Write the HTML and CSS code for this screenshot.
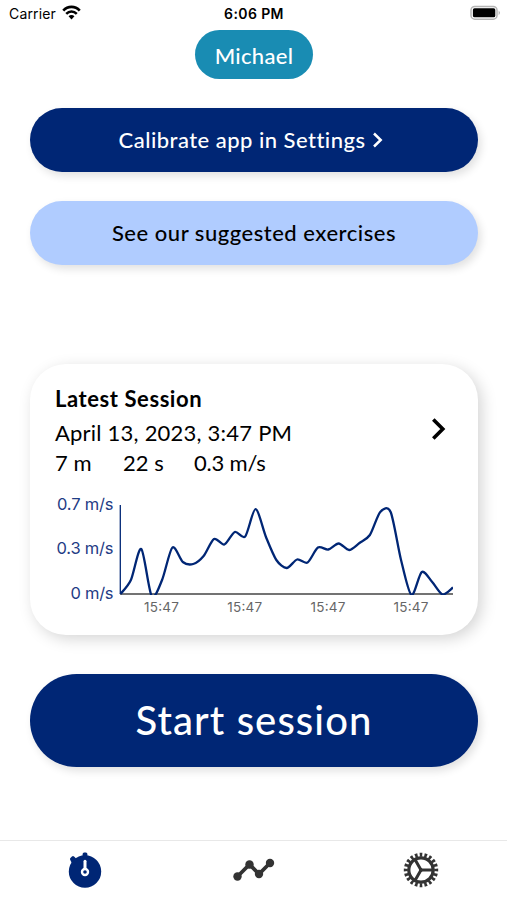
FILE: index.html
```html
<!DOCTYPE html>
<html lang="en">
<head>
    <meta charset="UTF-8">
    <meta name="viewport" content="width=device-width, initial-scale=1.0">
    <title>Home</title>
    <link rel="stylesheet" href="styles.css">
</head>
<body>
    <header class="status-bar">
        <div class="carrier">
            <span>Carrier</span>
            <svg width="19" height="15" viewBox="0 0 18 14">
                <path d="M1.2 5.2 C5.6 0.6 12.4 0.6 16.8 5.2" fill="none" stroke="#000" stroke-width="2.6"/>
                <path d="M4 8.4 C6.9 5.4 11.1 5.4 14 8.4" fill="none" stroke="#000" stroke-width="2.4"/>
                <path d="M6.2 10.6 C7.8 9.1 10.2 9.1 11.8 10.6 L9 13.6 Z"/>
            </svg>
        </div>
        <div class="clock">6:06 PM</div>
        <svg class="battery" width="31" height="15" viewBox="0 0 31 15">
            <rect x="1" y="1.4" width="26" height="12.8" rx="3.8" fill="#fff" stroke="#b5b5b5" stroke-width="1.5"/>
            <rect x="2.9" y="3.3" width="22.4" height="9" rx="1.6"/>
            <path d="M28.6 5.4 Q31.4 7.8 28.6 10.2 Z" fill="#b5b5b5"/>
        </svg>
    </header>

    <main>
        <div class="user">Michael</div>
        <button class="btn calibrate">
            <span>Calibrate app in Settings</span>
            <svg width="11" height="16" viewBox="0 0 11 16"><path d="M2 1.5 L8.7 8 L2 14.5" fill="none" stroke="#fff" stroke-width="2.5"/></svg>
        </button>
        <button class="btn exercises">See our suggested exercises</button>

        <section class="card">
            <div class="card-head">
                <div>
                    <h2>Latest Session</h2>
                    <p class="date">April 13, 2023, 3:47 PM</p>
                    <p class="stats"><span class="minutes">7 m</span><span class="seconds">22 s</span><span>0.3 m/s</span></p>
                </div>
                <svg class="arrow" width="16" height="24" viewBox="0 0 16 24"><path d="M2.3 2.5 L11.8 12 L2.3 21.5" fill="none" stroke="#000" stroke-width="3.6"/></svg>
            </div>
            <svg class="chart" width="410" height="125" viewBox="50 490 410 125">
                <clipPath id="plot"><rect x="119" y="500" width="334" height="95"/></clipPath>
                <line class="axis-y" x1="120.3" y1="505" x2="120.3" y2="594"/>
                <line class="axis-x" x1="120" y1="594" x2="453" y2="594"/>
                <path id="speed" class="speed" clip-path="url(#plot)"/>
                <g class="y-labels">
                    <text x="113.5" y="510" textLength="56.5">0.7 m/s</text>
                    <text x="113.5" y="554" textLength="57">0.3 m/s</text>
                    <text x="113.5" y="598.5" textLength="43">0 m/s</text>
                </g>
                <g class="x-labels">
                    <text x="161.5" y="612" textLength="35">15:47</text>
                    <text x="244.7" y="612" textLength="35">15:47</text>
                    <text x="328" y="612" textLength="35">15:47</text>
                    <text x="411" y="612" textLength="35">15:47</text>
                </g>
            </svg>
        </section>

        <button class="btn start">Start session</button>
    </main>

    <nav class="tabs">
        <a class="tab">
            <svg width="36" height="38" viewBox="0 0 36 38">
                <g fill="#002675">
                    <circle cx="18" cy="20.5" r="16.2"/>
                    <rect x="15.6" y="1.6" width="4.8" height="5" rx="1.5"/>
                    <path d="M4.5 8 L6 6.5 L9 9.5 L6.5 12 Z" stroke="#002675" stroke-width="3" stroke-linejoin="round"/>
                </g>
                <path d="M18 10.2 V18" stroke="#fff" stroke-width="3" stroke-linecap="round"/>
                <circle cx="18" cy="21" r="3" fill="#002675" stroke="#fff" stroke-width="2.4"/>
            </svg>
        </a>
        <a class="tab">
            <svg width="42" height="24" viewBox="0 0 42 24" fill="#333">
                <path d="M4.5 18.5 L16.5 6.5 L26 16 L37 5" fill="none" stroke="#333" stroke-width="3.8"/>
                <circle cx="4.5" cy="18.5" r="4.2"/><circle cx="16.5" cy="6.5" r="4.2"/>
                <circle cx="26" cy="16" r="4.2"/><circle cx="37" cy="5" r="4.2"/>
            </svg>
        </a>
        <a class="tab gear">
            <svg width="36" height="36" viewBox="-18 -18 36 36" fill="none" stroke="#333">
                <circle r="12.2" stroke-width="3.2"/>
                <!-- 20 teeth -->
                <circle r="15.2" stroke-width="4" pathLength="40" stroke-dasharray="1.1 0.9" stroke-dashoffset="0.55"/>
                <path d="M0 0 H12 M0 0 L-6 10.4 M0 0 L-6 -10.4" stroke-width="3"/>
                <circle r="1.5" fill="#333" stroke-width="1"/>
            </svg>
        </a>
    </nav>

    <script>
        const heights = [594, 580, 549, 596, 580, 547.5, 562, 564, 556, 539, 544.5, 532, 536.5,
            509.2, 537, 560, 568, 559.5, 562.5, 547.5, 549.5, 543.5, 550, 543, 535, 512,
            512, 560, 595, 572, 582, 594.5, 587.5];
        const points = heights.map((y, i) => [120.5 + i * 10.39, y]);

        // control point next to a, along the line through its neighbours
        function control(before, a, after, sign) {
            return [a[0] + sign * (after[0] - before[0]) * 0.14, a[1] + sign * (after[1] - before[1]) * 0.14];
        }

        let d = 'M' + points[0];
        for (let i = 1; i < points.length; i++) {
            const a = points[i - 1];
            const b = points[i];
            const c1 = control(points[i - 2] || a, a, b, 1);
            const c2 = control(a, b, points[i + 1] || b, -1);
            d += ' C' + c1 + ' ' + c2 + ' ' + b;
        }
        document.getElementById('speed').setAttribute('d', d);
    </script>
</body>
</html>
```
FILE: styles.css
```css
* {
    box-sizing: border-box;
}
body {
    margin: 0;
    height: 900px;
    display: flex;
    flex-direction: column;
    font-family: Lato, "Noto Sans", sans-serif;
    background-color: #fff;
    color: #000;
    overflow: hidden;
}
h2, p {
    margin: 0;
}
svg {
    display: block;
    flex: none;
}
.status-bar {
    height: 30px;
    padding: 5px 6px 0 9px;
    display: grid;
    grid-template-columns: 1fr auto 1fr;
    align-items: start;
    font-family: Inter, sans-serif;
    font-size: 14px;
    line-height: 18px;
}
.carrier {
    display: flex;
    gap: 6px;
    letter-spacing: 0.15px;
}
.clock {
    margin-right: 2px;
    font-weight: 600;
    letter-spacing: 0.4px;
}
.battery {
    justify-self: end;
}
main {
    flex: 1;
    padding: 0 29px 0 30px;
    display: flex;
    flex-direction: column;
}
.user {
    align-self: center;
    width: 118px;
    height: 49px;
    border-radius: 25px;
    background-color: #198cb3;
    color: #fff;
    font-size: 22px;
    font-weight: 500;
    line-height: 51px;
    letter-spacing: 0.3px;
    text-align: center;
}
.btn {
    display: flex;
    align-items: center;
    justify-content: center;
    height: 64px;
    padding: 0 0 2px;
    border: none;
    border-radius: 50px;
    font-family: inherit;
    font-size: 22px;
    font-weight: 500;
    color: #fff;
    background-color: #002675;
    box-shadow: 3px 4px 9px rgba(0, 0, 0, 0.12);
}
.calibrate {
    margin-top: 29px;
    padding-right: 6px;
    gap: 7px;
    letter-spacing: 0.47px;
}
.calibrate svg {
    margin-top: 2px;
}
.exercises {
    margin-top: 29px;
    background-color: #b0ccff;
    color: #000;
    letter-spacing: 0.52px;
}
.card {
    height: 271px;
    margin-top: 99px;
    padding: 20px 18px 0 20px;
    border-radius: 36px;
    background-color: #fff;
    box-shadow: 4px 4px 15px rgba(0, 0, 0, 0.17);
}
.card-head {
    height: 106px;
    padding: 0 13px 0 5px;
    display: flex;
    justify-content: space-between;
    font-size: 22px;
}
.card h2 {
    font-size: 22px;
    line-height: 29px;
    font-weight: 700;
    letter-spacing: 0.57px;
}
.date {
    margin-top: 5px;
    line-height: 30px;
    letter-spacing: 0.22px;
}
.stats {
    display: flex;
    line-height: 30px;
    letter-spacing: -0.2px;
}
.minutes {
    width: 68px;
    letter-spacing: 0;
}
.seconds {
    width: 71px;
    letter-spacing: 0;
}
.arrow {
    margin-top: 33px;
}
.axis-y {
    stroke: #002675;
    stroke-width: 1.3;
}
.axis-x {
    stroke: #444;
    stroke-width: 1.5;
}
.speed {
    fill: none;
    stroke: #002675;
    stroke-width: 2.3;
    stroke-linejoin: round;
}
.y-labels {
    font: 16.5px Inter, sans-serif;
    fill: #1f3c85;
    text-anchor: end;
}
.x-labels {
    font: 13.5px Inter, sans-serif;
    fill: #666;
    text-anchor: middle;
}
.start {
    height: 93px;
    margin-top: 39px;
    font-size: 40px;
    letter-spacing: 1.1px;
}
.tabs {
    height: 60px;
    padding-bottom: 2px;
    border-top: 1px solid #e8e8e8;
    display: grid;
    grid-template-columns: repeat(3, 1fr);
}
.tab {
    display: flex;
    align-items: center;
    justify-content: center;
}
.gear {
    padding-right: 3px;
}
```
